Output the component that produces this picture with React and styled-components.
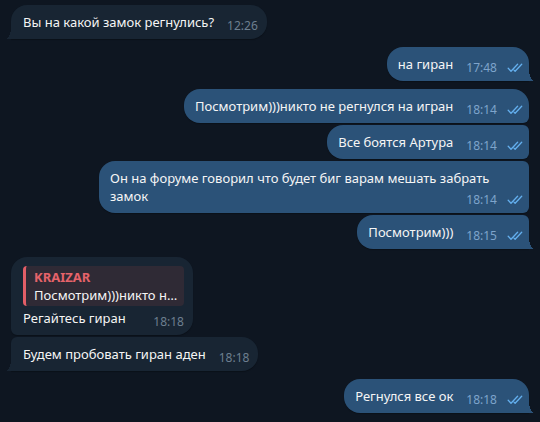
import styled, { createGlobalStyle } from "styled-components";

const GlobalStyle = createGlobalStyle`
    html, body {
        margin: 0;
        padding: 0;
        background: #0e1621;
    }

    body {
        font-family: "Noto Sans", "Open Sans", sans-serif;
    }
`;

const OUT_BG = "#2b5278";
const IN_BG = "#182533";

const Chat = styled.div`
    box-sizing: border-box;
    display: flex;
    flex-direction: column;
    min-height: 422px;
    padding: 5px 11px 0;
`;

const Row = styled.div`
    display: flex;
    justify-content: ${(p) => (p.$out ? "flex-end" : "flex-start")};
    margin-top: ${(p) => (p.$first ? "8px" : "2px")};

    &:first-child {
        margin-top: 0;
    }
`;

const radius = (p) => {
    const big = "16px";
    const small = "6px";
    const top = p.$first ? big : small;
    const bottom = p.$tail ? "0" : small;
    return p.$out
        ? `${big} ${top} ${bottom} ${big}`
        : `${top} ${big} ${big} ${bottom}`;
};

const Bubble = styled.div`
    background: ${(p) => (p.$out ? OUT_BG : IN_BG)};
    border-radius: ${radius};
    box-shadow: 0 1px 1px rgba(0, 0, 0, 0.25);
    box-sizing: border-box;
    color: #f5f5f5;
    display: flow-root;
    font-size: 13px;
    line-height: 18px;
    max-width: 430px;
    padding: 8px ${(p) => (p.$out ? "5px" : "9px")} 8px ${(p) => (p.$out ? "11px" : "12px")};
    position: relative;

    &::after {
        content: ${(p) => (p.$tail ? "''" : "none")};
        position: absolute;
        bottom: 0;
        ${(p) => (p.$out ? "right: -6px;" : "left: -6px;")}
        width: 6px;
        height: 12px;
        background: radial-gradient(
            6px 12px at ${(p) => (p.$out ? "100% 0" : "0 0")},
            transparent 99%,
            ${(p) => (p.$out ? OUT_BG : IN_BG)} 100%
        );
    }
`;

const Meta = styled.span`
    align-items: center;
    color: ${(p) => (p.$out ? "#7ea4cb" : "#6d7f8f")};
    display: flex;
    float: right;
    font-size: 12px;
    line-height: 18px;
    margin: 4px 0 -4px 13px;

    > svg {
        margin-left: 10px;
    }
`;

const Quote = styled.div`
    background: #2f2a35;
    border-left: 3px solid #e25e67;
    border-radius: 4px;
    box-sizing: border-box;
    margin: 1px 0 3px;
    padding: 3px 3px 2px 8px;
    width: 161px;

    > .name {
        color: #e5636a;
        font-size: 13px;
        font-weight: 700;
        line-height: 17px;
    }

    > .text {
        overflow: hidden;
        text-overflow: ellipsis;
        white-space: nowrap;
    }
`;

const Checks = () => (
    <svg width="17" height="10" viewBox="0 0 17 10" fill="none">
        <path
            d="M1.2 5.3 L4 8.2 L10.6 1.2 M7 7.1 L8.1 8.2 L14.7 1.2"
            stroke="#64b0ef"
            strokeWidth="1.3"
            strokeLinecap="round"
            strokeLinejoin="round"
        />
    </svg>
);

const MESSAGES = [
    { id: 1, out: false, first: true, tail: true, text: "Вы на какой замок регнулись?", time: "12:26" },
    { id: 2, out: true, first: true, tail: true, text: "на гиран", time: "17:48" },
    { id: 3, out: true, first: true, tail: false, text: "Посмотрим)))никто не регнулся на игран", time: "18:14" },
    { id: 4, out: true, first: false, tail: false, text: "Все боятся Артура", time: "18:14" },
    { id: 5, out: true, first: false, tail: false, text: "Он на форуме говорил что будет биг варам мешать забрать замок", time: "18:14" },
    { id: 6, out: true, first: false, tail: true, text: "Посмотрим)))", time: "18:15" },
    {
        id: 7, out: false, first: true, tail: false, text: "Регайтесь гиран", time: "18:18",
        reply: { name: "KRAIZAR", text: "Посмотрим)))никто не регнулся на игран" },
    },
    { id: 8, out: false, first: false, tail: true, text: "Будем пробовать гиран аден", time: "18:18" },
    { id: 9, out: true, first: true, tail: true, text: "Регнулся все ок", time: "18:18" },
];

const Message = ({ out, first, tail, text, time, reply }) => (
    <Row $out={out} $first={first}>
        <Bubble $out={out} $first={first} $tail={tail}>
            {reply && (
                <Quote>
                    <div className="name">{reply.name}</div>
                    <div className="text">{reply.text}</div>
                </Quote>
            )}
            {text}
            <Meta $out={out}>
                {time}
                {out && <Checks />}
            </Meta>
        </Bubble>
    </Row>
);

const App = () => {
    return (
        <>
            <GlobalStyle />
            <Chat>
                {MESSAGES.map((m) => <Message key={m.id} {...m} />)}
            </Chat>
        </>
    );
};

export default App;
